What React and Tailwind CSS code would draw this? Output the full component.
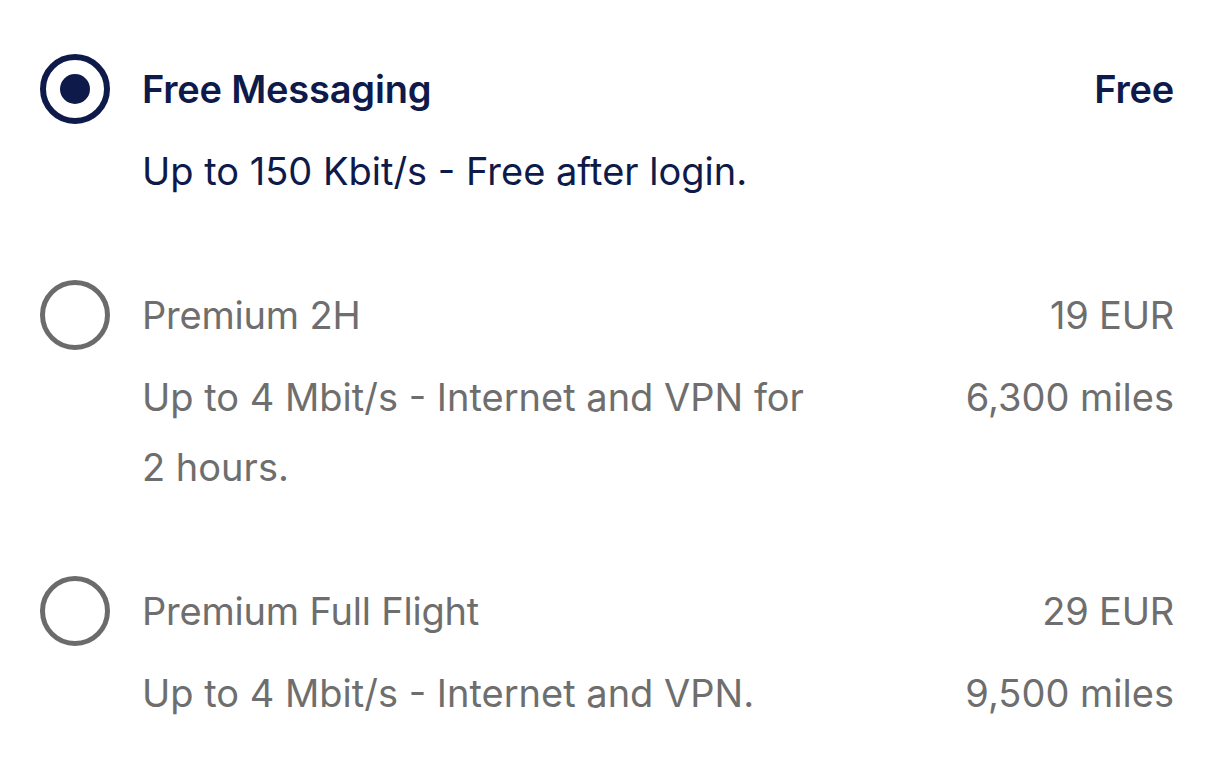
import React from "react";

const plans = [
  {
    title: "Free Messaging",
    price: "Free",
    desc: "Up to 150 Kbit/s - Free after login.",
    miles: "",
    active: true,
  },
  {
    title: "Premium 2H",
    price: "19 EUR",
    desc: "Up to 4 Mbit/s - Internet and VPN for 2 hours.",
    miles: "6,300 miles",
    active: false,
  },
  {
    title: "Premium Full Flight",
    price: "29 EUR",
    desc: "Up to 4 Mbit/s - Internet and VPN.",
    miles: "9,500 miles",
    active: false,
  },
];

function Radio({ active }) {
  return active ? (
    <div className="w-[70px] h-[70px] shrink-0 rounded-full border-[6px] border-[#0e1a4a] flex items-center justify-center">
      <div className="w-[30px] h-[30px] rounded-full bg-[#0e1a4a]" />
    </div>
  ) : (
    <div className="w-[70px] h-[70px] shrink-0 rounded-full border-[5px] border-[#6b6b6b]" />
  );
}

export default function App() {
  return (
    <div
      className="w-[1206px] h-[760px] bg-white pl-[40px] pr-[32px] pt-[54px] flex flex-col gap-[74px] overflow-hidden"
      style={{ fontFamily: "Inter, 'Noto Sans', sans-serif" }}
    >
      {plans.map((p) => {
        const color = p.active ? "text-[#0e1a4a]" : "text-[#6e6e6e]";
        return (
          <div key={p.title} className="flex items-start gap-[32px]">
            <Radio active={p.active} />
            <div className={`flex-1 flex flex-col gap-[12px] ${color}`}>
              <div className="flex justify-between items-center h-[70px] text-[38px] leading-[70px] tracking-[-0.2px]">
                <span className={p.active ? "font-semibold" : "font-normal"}>{p.title}</span>
                <span className={p.active ? "font-semibold" : "font-normal"}>{p.price}</span>
              </div>
              <div className="flex justify-between items-start text-[38px] leading-[70px]">
                <span className="max-w-[685px]">{p.desc}</span>
                {p.miles && <span className="whitespace-nowrap">{p.miles}</span>}
              </div>
            </div>
          </div>
        );
      })}
    </div>
  );
}
